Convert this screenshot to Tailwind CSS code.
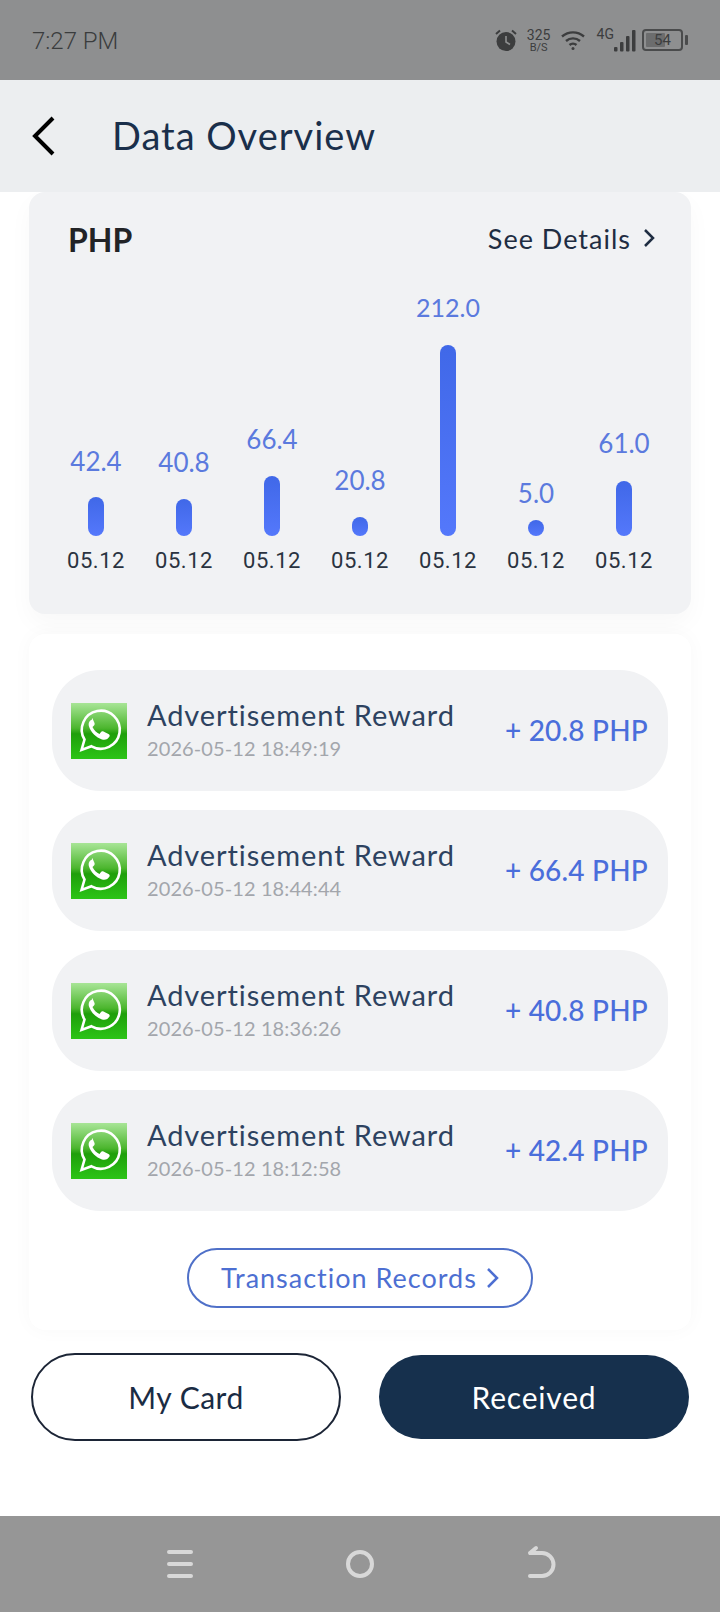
<!DOCTYPE html>
<html><head><meta charset="utf-8"><script src="https://cdn.jsdelivr.net/npm/@tailwindcss/browser@4"></script></head>
<body class="m-0">
<div class="w-[720px] h-[1612px] bg-white flex flex-col overflow-hidden font-['Lato','Liberation_Sans',sans-serif]">
  <div class="h-[80px] bg-[#8e8f90] flex items-center justify-between pl-[32px] pr-[32px] shrink-0">
    <span class="pt-[2px] text-[24px] text-[#3a3c3d] font-['Roboto',sans-serif] font-light">7:27 PM</span>
    <div class="flex items-center text-[#3c3d3e] font-['Roboto',sans-serif]">
      <svg width="24" height="24" viewBox="0 0 24 24" class="mr-[8px]"><circle cx="12" cy="13.5" r="9.5" fill="#3c3d3e"/><path d="M12 8v6l4 2.5" stroke="#8e8f90" stroke-width="1.6" fill="none"/><path d="M2 6l4-3.5M22 6l-4-3.5" stroke="#3c3d3e" stroke-width="2"/></svg>
      <div class="flex flex-col items-center leading-none w-[26px]"><span class="text-[14px] leading-[14px]">325</span><span class="text-[11px] leading-[11px]">B/S</span></div>
      <svg width="26" height="22" viewBox="0 0 26 22" class="ml-[8px]" fill="none" stroke="#3c3d3e" stroke-width="2.4"><path d="M2 7.5c6.500-5.500 15.500-5.500 22 0"/><path d="M6 12c4-3.500 10-3.500 14 0"/><path d="M9.500 16c2-1.700 5-1.700 7 0"/><circle cx="13" cy="19.500" r="1.500" fill="#3c3d3e" stroke="none"/></svg>
      <span class="text-[14px] ml-[11px] self-start mt-[-4px]">4G</span>
      <svg width="22" height="23" viewBox="0 0 22 23" class="ml-[0px]" fill="#3c3d3e"><rect x="0" y="18" width="3.500" height="4.500" rx="1"/><rect x="6" y="13" width="3.500" height="9.500" rx="1"/><rect x="12" y="7" width="3.500" height="15.500" rx="1"/><rect x="18" y="1" width="3.500" height="21.500" rx="1"/></svg>
      <div class="relative ml-[6px] w-[41px] h-[22px] border-2 border-[#4a4b4c] rounded-[4px] flex items-center justify-center">
        <div class="absolute left-[2px] top-[2px] bottom-[2px] w-[19px] bg-[#6c6d6e] rounded-[1px]"></div>
        <span class="relative text-[15px] leading-none">54</span>
        <div class="absolute right-[-7px] top-[4px] w-[3px] h-[10px] bg-[#4a4b4c] rounded-[1px]"></div>
      </div>
      <div class="w-[5px]"></div>
    </div>
  </div>
  <div class="h-[112px] bg-[#eceef0] flex items-center shrink-0 relative z-10">
    <svg width="24" height="40" viewBox="0 0 24 40" class="ml-[31px]" fill="none" stroke="#000" stroke-width="4"><path d="M22 2 L4 20 L22 38"/></svg>
    <span class="ml-[57px] pb-[2px] text-[38px] tracking-[1px] leading-none text-[#1a2f4b]">Data Overview</span>
  </div>
  <div class="mx-[29px] h-[422px] bg-[#f1f2f4] rounded-[16px] shadow-[0_10px_24px_rgba(0,0,0,0.03)] px-[39px] shrink-0 flex flex-col">
    <div class="flex items-center justify-between h-[40px] mt-[26px] mr-[-3px]">
      <span class="pt-[4px] text-[32px] font-bold text-[#222326] leading-none">PHP</span>
      <span class="flex items-center text-[27px] tracking-[1px] text-[#1f2d42] leading-none">See Details
        <svg width="12" height="20" viewBox="0 0 12 20" class="ml-[12px]" fill="none" stroke="#1f2d42" stroke-width="2.500"><path d="M2 2l8 8-8 8"/></svg></span>
    </div>
    <div class="mt-[33px] h-[265px] grid grid-cols-7 w-[616px] ml-[-16px] items-end">
      <div class="flex flex-col items-center"><span class="text-[26px] leading-[32px] text-[#5b7ade]">42.4</span><div class="mt-[20px] w-[16px] h-[39px] rounded-full bg-gradient-to-b from-[#4068e8] to-[#5478fb]"></div><span class="mt-[12px] text-[22px] leading-[26px] tracking-[0.5px] text-[#2a3340] font-['Roboto',sans-serif]">05.12</span></div>
      <div class="flex flex-col items-center"><span class="text-[26px] leading-[32px] text-[#5b7ade]">40.8</span><div class="mt-[21px] w-[16px] h-[37px] rounded-full bg-gradient-to-b from-[#4068e8] to-[#5478fb]"></div><span class="mt-[12px] text-[22px] leading-[26px] tracking-[0.5px] text-[#2a3340] font-['Roboto',sans-serif]">05.12</span></div>
      <div class="flex flex-col items-center"><span class="text-[26px] leading-[32px] text-[#5b7ade]">66.4</span><div class="mt-[21px] w-[16px] h-[60px] rounded-full bg-gradient-to-b from-[#4068e8] to-[#5478fb]"></div><span class="mt-[12px] text-[22px] leading-[26px] tracking-[0.5px] text-[#2a3340] font-['Roboto',sans-serif]">05.12</span></div>
      <div class="flex flex-col items-center"><span class="text-[26px] leading-[32px] text-[#5b7ade]">20.8</span><div class="mt-[21px] w-[16px] h-[19px] rounded-full bg-gradient-to-b from-[#4068e8] to-[#5478fb]"></div><span class="mt-[12px] text-[22px] leading-[26px] tracking-[0.5px] text-[#2a3340] font-['Roboto',sans-serif]">05.12</span></div>
      <div class="flex flex-col items-center"><span class="text-[25px] leading-[32px] text-[#5b7ade]">212.0</span><div class="mt-[22px] w-[16px] h-[191px] rounded-full bg-gradient-to-b from-[#4068e8] to-[#5478fb]"></div><span class="mt-[12px] text-[22px] leading-[26px] tracking-[0.5px] text-[#2a3340] font-['Roboto',sans-serif]">05.12</span></div>
      <div class="flex flex-col items-center"><span class="text-[26px] leading-[32px] text-[#5b7ade]">5.0</span><div class="mt-[11px] w-[16px] h-[16px] rounded-full bg-gradient-to-b from-[#4068e8] to-[#5478fb]"></div><span class="mt-[12px] text-[22px] leading-[26px] tracking-[0.5px] text-[#2a3340] font-['Roboto',sans-serif]">05.12</span></div>
      <div class="flex flex-col items-center"><span class="text-[26px] leading-[32px] text-[#5b7ade]">61.0</span><div class="mt-[22px] w-[16px] h-[55px] rounded-full bg-gradient-to-b from-[#4068e8] to-[#5478fb]"></div><span class="mt-[12px] text-[22px] leading-[26px] tracking-[0.5px] text-[#2a3340] font-['Roboto',sans-serif]">05.12</span></div>
    </div>
  </div>
  <div class="mx-[29px] mt-[20px] h-[696px] bg-white rounded-[16px] shadow-[0_0_20px_rgba(0,0,0,0.03)] px-[23px] pt-[36px] shrink-0 flex flex-col items-center">
    <div class="w-full flex flex-col gap-[19px]">
      <div class="h-[121px] bg-[#f1f2f4] rounded-[48px] flex items-center pl-[19px] pr-[20px]">
        <svg width="56" height="56" viewBox="0 0 56 56" class="shrink-0"><defs><linearGradient id="g1" x1="0" y1="0" x2="0" y2="1"><stop offset="0" stop-color="#a8e596"/><stop offset="0.45" stop-color="#4cb62e"/><stop offset="0.55" stop-color="#1f9f0a"/><stop offset="1" stop-color="#2cc417"/></linearGradient></defs><rect width="56" height="56" fill="url(#g1)"/><path d="M10.500 47l3-10.500a19 19 0 1 1 7 6.800z" fill="none" stroke="#fff" stroke-width="2.600"/><path d="M21 16.500c-2.500 1-4 3.500-3 7 2 6 7 11 13 13 3.500 1 6-.5 7.500-3 .5-1 0-2-1-2.500l-5-2.500c-1-.5-2-.3-2.700.7l-1.300 1.700c-3-1.300-5.500-4-7-7l1.500-1.300c.7-.7.8-1.500.5-2.500l-2-4.500c-.3-.8-.8-.8-.5-.1z" fill="#fff"/></svg>
        <div class="ml-[20px] pb-[4px] flex flex-col flex-1"><span class="text-[29px] tracking-[0.9px] leading-[34px] text-[#2d4260]">Advertisement Reward</span><span class="mt-[4px] text-[20px] tracking-[0.1px] leading-[24px] text-[#a3a6ac]">2026-05-12 18:49:19</span></div>
        <span class="pb-[1px] text-[28px] tracking-[0.2px] font-medium text-[#4a6edb]">+ 20.8 PHP</span>
      </div>
      <div class="h-[121px] bg-[#f1f2f4] rounded-[48px] flex items-center pl-[19px] pr-[20px]">
        <svg width="56" height="56" viewBox="0 0 56 56" class="shrink-0"><rect width="56" height="56" fill="url(#g1)"/><path d="M10.500 47l3-10.500a19 19 0 1 1 7 6.800z" fill="none" stroke="#fff" stroke-width="2.600"/><path d="M21 16.500c-2.500 1-4 3.500-3 7 2 6 7 11 13 13 3.500 1 6-.5 7.500-3 .5-1 0-2-1-2.500l-5-2.500c-1-.5-2-.3-2.700.7l-1.300 1.700c-3-1.300-5.500-4-7-7l1.500-1.300c.7-.7.8-1.500.5-2.500l-2-4.500c-.3-.8-.8-.8-.5-.1z" fill="#fff"/></svg>
        <div class="ml-[20px] pb-[4px] flex flex-col flex-1"><span class="text-[29px] tracking-[0.9px] leading-[34px] text-[#2d4260]">Advertisement Reward</span><span class="mt-[4px] text-[20px] tracking-[0.1px] leading-[24px] text-[#a3a6ac]">2026-05-12 18:44:44</span></div>
        <span class="pb-[1px] text-[28px] tracking-[0.2px] font-medium text-[#4a6edb]">+ 66.4 PHP</span>
      </div>
      <div class="h-[121px] bg-[#f1f2f4] rounded-[48px] flex items-center pl-[19px] pr-[20px]">
        <svg width="56" height="56" viewBox="0 0 56 56" class="shrink-0"><rect width="56" height="56" fill="url(#g1)"/><path d="M10.500 47l3-10.500a19 19 0 1 1 7 6.800z" fill="none" stroke="#fff" stroke-width="2.600"/><path d="M21 16.500c-2.500 1-4 3.500-3 7 2 6 7 11 13 13 3.500 1 6-.5 7.500-3 .5-1 0-2-1-2.500l-5-2.500c-1-.5-2-.3-2.700.7l-1.300 1.700c-3-1.300-5.500-4-7-7l1.500-1.300c.7-.7.8-1.500.5-2.500l-2-4.500c-.3-.8-.8-.8-.5-.1z" fill="#fff"/></svg>
        <div class="ml-[20px] pb-[4px] flex flex-col flex-1"><span class="text-[29px] tracking-[0.9px] leading-[34px] text-[#2d4260]">Advertisement Reward</span><span class="mt-[4px] text-[20px] tracking-[0.1px] leading-[24px] text-[#a3a6ac]">2026-05-12 18:36:26</span></div>
        <span class="pb-[1px] text-[28px] tracking-[0.2px] font-medium text-[#4a6edb]">+ 40.8 PHP</span>
      </div>
      <div class="h-[121px] bg-[#f1f2f4] rounded-[48px] flex items-center pl-[19px] pr-[20px]">
        <svg width="56" height="56" viewBox="0 0 56 56" class="shrink-0"><rect width="56" height="56" fill="url(#g1)"/><path d="M10.500 47l3-10.500a19 19 0 1 1 7 6.800z" fill="none" stroke="#fff" stroke-width="2.600"/><path d="M21 16.500c-2.500 1-4 3.500-3 7 2 6 7 11 13 13 3.500 1 6-.5 7.500-3 .5-1 0-2-1-2.500l-5-2.500c-1-.5-2-.3-2.700.7l-1.300 1.700c-3-1.300-5.500-4-7-7l1.500-1.300c.7-.7.8-1.500.5-2.500l-2-4.500c-.3-.8-.8-.8-.5-.1z" fill="#fff"/></svg>
        <div class="ml-[20px] pb-[4px] flex flex-col flex-1"><span class="text-[29px] tracking-[0.9px] leading-[34px] text-[#2d4260]">Advertisement Reward</span><span class="mt-[4px] text-[20px] tracking-[0.1px] leading-[24px] text-[#a3a6ac]">2026-05-12 18:12:58</span></div>
        <span class="pb-[1px] text-[28px] tracking-[0.2px] font-medium text-[#4a6edb]">+ 42.4 PHP</span>
      </div>
    </div>
    <div class="mt-[37px] w-[346px] h-[60px] border-2 border-[#4f70c8] rounded-full flex items-center justify-center text-[27px] tracking-[1px] text-[#4d6fd2]">Transaction Records
      <svg width="13" height="22" viewBox="0 0 13 22" class="ml-[9px]" fill="none" stroke="#4d6fd2" stroke-width="2.500"><path d="M2 2l9 9-9 9"/></svg></div>
  </div>
  <div class="mx-[31px] mt-[23px] flex items-center justify-between">
    <div class="w-[310px] h-[88px] border-2 border-[#1c2536] rounded-full flex items-center justify-center text-[30px] tracking-[0.5px] text-[#1a2c44]">My Card</div>
    <div class="w-[310px] h-[84px] bg-[#16304d] rounded-full flex items-center justify-center text-[30px] tracking-[0.8px] text-white">Received</div>
  </div>
  <div class="mt-auto h-[96px] bg-[#969696] flex items-center justify-center relative shrink-0">
    <svg width="720" height="96" viewBox="0 0 720 96" fill="none" stroke="#d8d8d8" stroke-width="4" stroke-linecap="round"><path d="M169 36h22M169 48h22M169 60h22" stroke-width="4"/><circle cx="360" cy="48" r="12" stroke-width="4"/><path d="M530 37h12a11.500 11.500 0 0 1 0 23h-12M530 37l6-5"/></svg>
  </div>
</div>
</body></html>
